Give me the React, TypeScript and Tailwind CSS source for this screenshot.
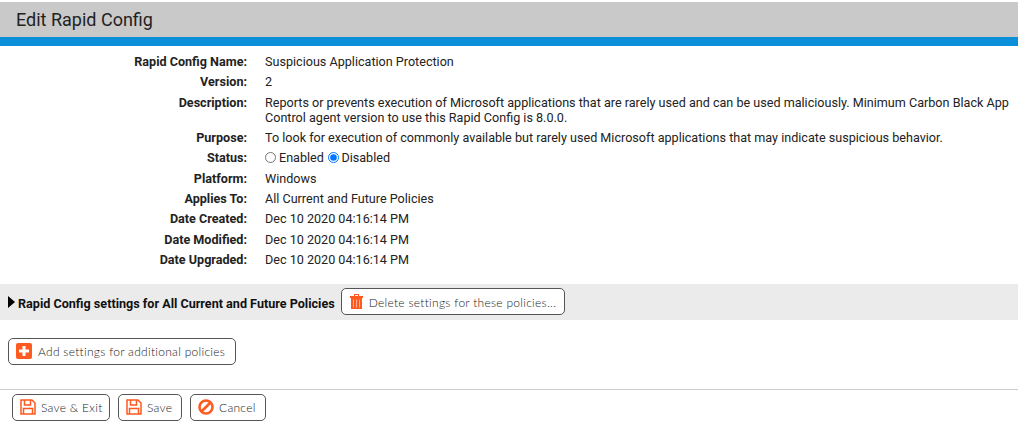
import type { ReactNode } from "react";

const rows: [string, string][] = [
  ["Rapid Config Name:", "Suspicious Application Protection"],
  ["Version:", "2"],
  [
    "Description:",
    "Reports or prevents execution of Microsoft applications that are rarely used and can be used maliciously. Minimum Carbon Black App Control agent version to use this Rapid Config is 8.0.0.",
  ],
  [
    "Purpose:",
    "To look for execution of commonly available but rarely used Microsoft applications that may indicate suspicious behavior.",
  ],
  ["Status:", ""],
  ["Platform:", "Windows"],
  ["Applies To:", "All Current and Future Policies"],
  ["Date Created:", "Dec 10 2020 04:16:14 PM"],
  ["Date Modified:", "Dec 10 2020 04:16:14 PM"],
  ["Date Upgraded:", "Dec 10 2020 04:16:14 PM"],
];

function SaveIcon() {
  return (
    <svg width="16" height="16" viewBox="0 0 16 16" fill="none" stroke="#ff5a1f" strokeWidth="1.5">
      <path d="M1 1h11l3 3v11H1z" />
      <path d="M4.500 1v5h6V1M3.500 15V9.500h9V15" />
    </svg>
  );
}

function CancelIcon() {
  return (
    <svg width="16" height="16" viewBox="0 0 16 16" fill="none" stroke="#ff5a1f" strokeWidth="2.6">
      <circle cx="8" cy="8" r="6.500" />
      <path d="M3.500 12.500 12.500 3.500" />
    </svg>
  );
}

function TrashIcon() {
  return (
    <svg width="13" height="15" viewBox="0 0 13 15">
      <path d="M0 2h13v2H0z" fill="#ff5a1f" />
      <path d="M4 0h5v2H8V1H5v1H4z" fill="#ff5a1f" />
      <path d="M1 4h11v11H1z" fill="#ff5a1f" />
      <path d="M3.500 5.500v8M6.500 5.500v8M9.500 5.500v8" stroke="#ffb199" strokeWidth="1" />
    </svg>
  );
}

function PlusIcon() {
  return (
    <svg width="16" height="16" viewBox="0 0 16 16">
      <rect width="16" height="16" rx="2" fill="#ff5a1f" />
      <path d="M6.500 3h3v3.500h3.500v3H9.500V13h-3V9.500H3v-3h3.500z" fill="#fff" />
    </svg>
  );
}

function Btn({ icon, label, cls }: { icon: ReactNode; label: string; cls: string }) {
  return (
    <button
      className={`flex items-center rounded-[5px] border border-[#555] bg-white font-['Lato',sans-serif] text-[12px] font-light tracking-[0.28px] text-[#222] ${cls}`}
    >
      {icon}
      <span className="pt-[1px]">{label}</span>
    </button>
  );
}

export default function App() {
  return (
    <div className="h-[425px] w-[1018px] overflow-hidden bg-white font-['Roboto',sans-serif] text-[12.600px] leading-[15px] text-[#222]">
      <div className="mt-[2px] flex h-[35px] items-center bg-[#c9c9c9] pl-4 text-[18px] text-[#222]">
        Edit Rapid Config
      </div>
      <div className="h-[9px] bg-[#0a8fd8]" />
      <div className="pt-[5.400px]">
        {rows.map(([label, value]) => (
          <div key={label} className="flex py-[2.675px]">
            <div className="w-[247px] shrink-0 text-right font-bold">{label}</div>
            <div className="ml-[18px] w-[748px]">
              {label === "Status:" ? (
                <div className="flex items-center">
                  <input type="radio" name="status" className="mr-[3px] h-[11px] w-[11px]" />
                  <span>Enabled</span>
                  <input type="radio" name="status" defaultChecked className="ml-[4px] mr-[2.500px] h-[11px] w-[11px]" />
                  <span>Disabled</span>
                </div>
              ) : (
                value
              )}
            </div>
          </div>
        ))}
      </div>

      <div className="mt-[14.100px] flex h-[36px] items-center bg-[#ebebeb] pl-2">
        <svg width="7" height="12" viewBox="0 0 7 12" className="mr-[3px]">
          <path d="M0 0 7 6 0 12z" fill="#000" />
        </svg>
        <span className="pt-[4px] font-bold text-[#111]">Rapid Config settings for All Current and Future Policies</span>
        <Btn icon={<TrashIcon />} label="Delete settings for these policies..." cls="ml-[6px] h-[27px] w-[224px] gap-[6px] pl-[8px]" />
      </div>

      <div className="px-2 pt-[18px]">
        <Btn icon={<PlusIcon />} label="Add settings for additional policies" cls="h-[27px] w-[228px] gap-[6px] pl-[7px]" />
      </div>

      <div className="mt-[24px] flex gap-2 border-t border-[#ccc] pl-3 pt-1">
        <Btn icon={<SaveIcon />} label="Save & Exit" cls="h-[27px] w-[98px] gap-[5px] pl-[7px]" />
        <Btn icon={<SaveIcon />} label="Save" cls="h-[27px] w-[64px] gap-[5px] pl-[7px]" />
        <Btn icon={<CancelIcon />} label="Cancel" cls="h-[27px] w-[76px] gap-[5px] pl-[7px]" />
      </div>
    </div>
  );
}
